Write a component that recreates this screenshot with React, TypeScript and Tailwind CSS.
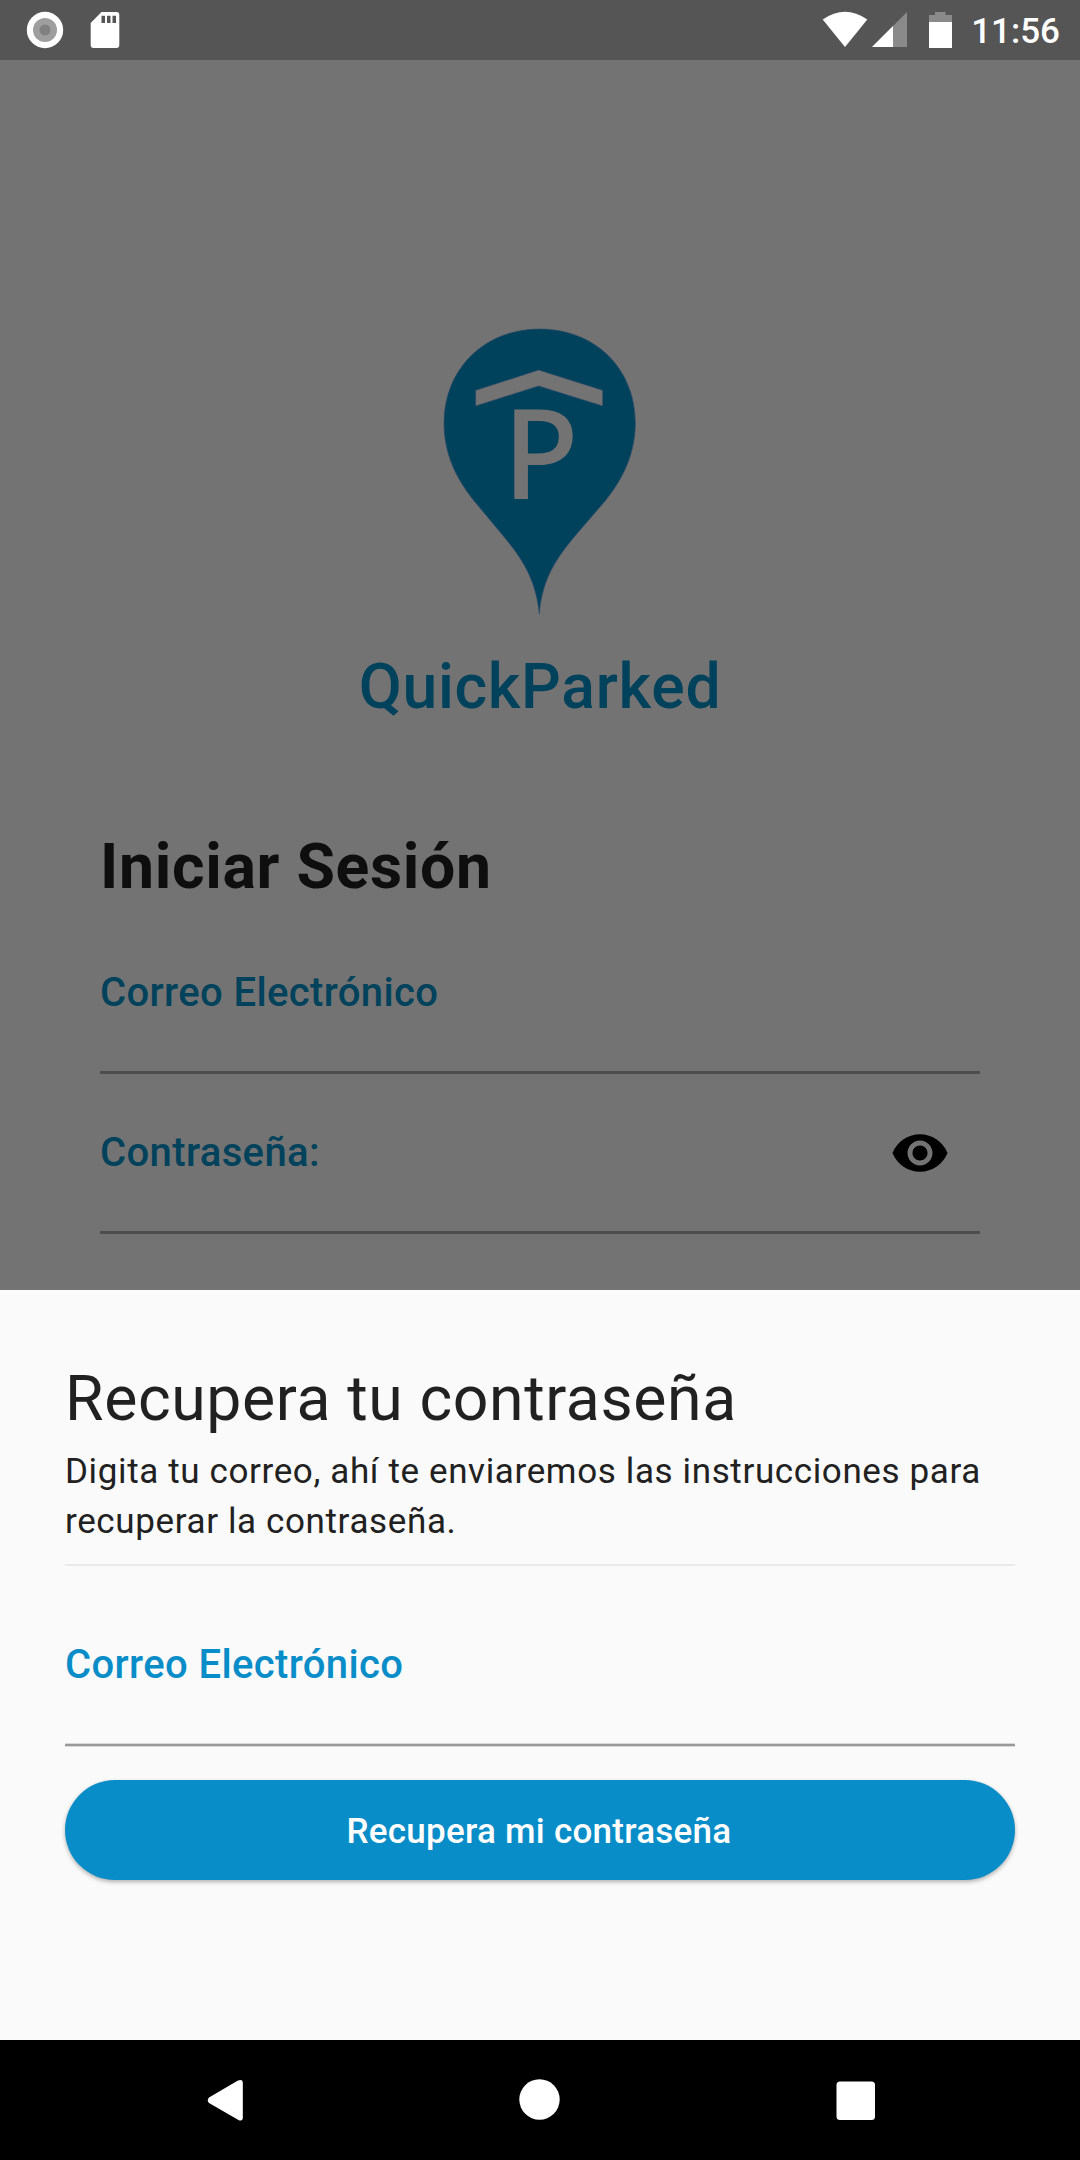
import React from "react";

function StatusBar() {
  return (
    <header className="flex h-[60px] items-center justify-between bg-[#555555] text-white">
      <div className="flex items-center pl-[25px]">
        <svg width="40" height="40" viewBox="0 0 40 40">
          <circle cx="20" cy="20" r="18.200" fill="#fff" />
          <circle cx="20" cy="20" r="12" fill="#9e9e9e" />
          <circle cx="20" cy="20" r="5.500" fill="#808080" />
        </svg>
        <svg className="ml-5" width="40" height="40" viewBox="0 0 40 40">
          <path
            fill="#fff"
            fillRule="evenodd"
            d="M16.500 2H31.500Q34.300 2 34.300 5V35Q34.300 38 31.500 38H8.500Q5.700 38 5.700 35V13ZM16.500 5.700V13H20V5.700ZM22 5.700V13H25.500V5.700ZM27.500 5.700V13H31V5.700Z"
          />
        </svg>
      </div>
      <div className="flex items-center pr-5">
        <svg width="46" height="40" viewBox="0 0 46 40">
          <path fill="#fff" d="M0.700 9.500Q23 -6 45.300 9.500L23 37Z" />
        </svg>
        <svg className="ml-[3px]" width="37" height="40" viewBox="0 0 37 40">
          <path fill="#8a8a8a" d="M1 37L36 2V37Z" />
          <path fill="#fff" d="M1 37L22 16V37Z" />
        </svg>
        <svg className="ml-5" width="25" height="40" viewBox="0 0 25 40">
          <path fill="#8a8a8a" d="M1 5H7V2H17.500V5H24V12H1Z" />
          <path fill="#fff" d="M1 12H24V38H1Z" />
        </svg>
        <span className="ml-[18px] pt-[3px] text-[35px] leading-[41px] font-medium">11:56</span>
      </div>
    </header>
  );
}

function PinLogo() {
  return (
    <svg className="mx-auto block" width="240" height="320" viewBox="0 0 720 960">
      <path
        fill="#00425b"
        stroke="#2f4a6b"
        strokeWidth="2"
        d="M358 912C347 800 300 738 245 672L160 570C125 525 72 450 72 340C72 175 195 57 358 57C525 57 646 175 646 340C646 450 590 530 556 572L470 672C415 738 367 800 358 912Z"
      />
      <path
        fill="#737373"
        stroke="#2f4a6b"
        strokeWidth="2"
        d="M167 241L356 180L548 241V288L356 228L167 288Z"
      />
      <text
        x="248"
        y="567"
        className="font-['Noto_Sans',sans-serif]"
        fontSize="374"
        fontWeight="500"
        fill="#737373"
      >
        P
      </text>
    </svg>
  );
}

function LoginForm() {
  return (
    <main className="h-[1230px] bg-[#737373] px-[100px] pt-[250px]">
      <PinLogo />
      <h1 className="mt-5 text-center text-[62.5px] leading-[73px] font-medium tracking-[0.7px] text-[#00425b]">
        QuickParked
      </h1>
      <h2 className="mt-[107px] text-[62.5px] leading-[73px] font-bold tracking-[0.7px] text-[#0e0e0e]">
        Iniciar Sesión
      </h2>
      <div className="mt-[66px] h-[105px] border-b-[3px] border-[#4d4d4d] text-[40px] leading-[47px] font-medium tracking-[0.375px] text-[#00425b]">
        Correo Electrónico
      </div>
      <div className="mt-[55px] flex h-[105px] items-start justify-between border-b-[3px] border-[#4d4d4d] pr-[30px] text-[40px] leading-[47px] font-medium tracking-[0.375px] text-[#00425b]">
        <span>Contraseña:</span>
        <svg className="-mt-[6px]" width="60" height="60" viewBox="0 0 24 24" fill="#000">
          <path d="M12 4.500C7 4.500 2.730 7.610 1 12c1.730 4.390 6 7.500 11 7.500s9.270-3.110 11-7.500c-1.730-4.390-6-7.500-11-7.500zM12 17c-2.760 0-5-2.240-5-5s2.240-5 5-5 5 2.240 5 5-2.240 5-5 5zm0-8c-1.660 0-3 1.340-3 3s1.340 3 3 3 3-1.340 3-3-1.340-3-3-3z" />
        </svg>
      </div>
    </main>
  );
}

function RecoverySheet() {
  return (
    <section className="h-[750px] bg-[#fafafa] px-[65px] pt-[72px] text-[#212121]">
      <h2 className="text-[62.5px] leading-[73px] tracking-[0.625px]">Recupera tu contraseña</h2>
      <p className="mt-3 text-[35px] leading-[50px] tracking-[0.625px]">
        Digita tu correo, ahí te enviaremos las instrucciones para recuperar la contraseña.
      </p>
      <div className="mt-[17px] h-[2px] bg-[#e9e9e9]" />
      <div className="mt-[75px] text-[40px] leading-[47px] font-medium tracking-[0.375px] text-[#098dc8]">
        Correo Electrónico
      </div>
      <div className="mt-[55px] h-1 border-y border-[#dadada] bg-[#999999]" />
      <button className="mt-[33px] block h-[100px] w-full rounded-full bg-[#098dc8] pt-[3px] pr-[2px] text-[35px] leading-[50px] font-medium tracking-[0.25px] text-white shadow-[0_2px_4px_rgba(0,0,0,0.3)]">
        Recupera mi contraseña
      </button>
    </section>
  );
}

function NavigationBar() {
  return (
    <nav className="flex h-[120px] items-center justify-between bg-black pr-[203px] pl-[205px]">
      <svg width="40" height="44" viewBox="0 0 40 44">
        <path
          fill="#fff"
          d="M4 19.500L33 2.500Q37.800 0.500 37.800 5V39.500Q37.800 44.200 33 41.700L4 25Q1.600 22.250 4 19.500Z"
        />
      </svg>
      <svg width="42" height="42" viewBox="0 0 42 42">
        <circle cx="20.500" cy="20.500" r="20.200" fill="#fff" />
      </svg>
      <svg width="42" height="42" viewBox="0 0 42 42">
        <rect x="1.500" y="2.500" width="38.500" height="38.500" rx="3.500" fill="#fff" />
      </svg>
    </nav>
  );
}

export default function App() {
  return (
    <div className="h-[2160px] w-[1080px] overflow-hidden font-[Roboto,sans-serif]">
      <StatusBar />
      <LoginForm />
      <RecoverySheet />
      <NavigationBar />
    </div>
  );
}
